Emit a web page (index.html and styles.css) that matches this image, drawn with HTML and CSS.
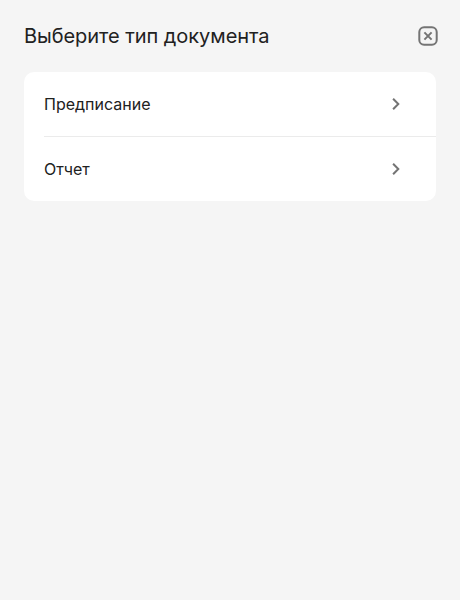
FILE: index.html
```html
<!DOCTYPE html>
<html lang="ru">
<head>
<meta charset="utf-8">
<title>Выберите тип документа</title>
<link rel="stylesheet" href="styles.css">
</head>
<body>
<header class="header">
  <h1 class="title">Выберите тип документа</h1>
  <button class="close" aria-label="Закрыть">
    <svg width="20" height="20" viewBox="0 0 20 20" fill="none" stroke="#747474" stroke-width="2"><rect x="1.3" y="1.3" width="17.4" height="17.4" rx="4.8"/><path d="M6.4 6.4l7.2 7.2m0-7.2l-7.2 7.2"/></svg>
  </button>
</header>
<main class="list">
  <a class="row"><span>Предписание</span><svg class="chevron" width="8" height="12" viewBox="0 0 8 12" fill="none" stroke="#747474" stroke-width="2"><path d="M1.1 .8l5.2 5.2-5.2 5.2"/></svg></a>
  <a class="row"><span>Отчет</span><svg class="chevron" width="8" height="12" viewBox="0 0 8 12" fill="none" stroke="#747474" stroke-width="2"><path d="M1.1 .8l5.2 5.2-5.2 5.2"/></svg></a>
</main>
</body>
</html>
```

FILE: styles.css
```css
* { box-sizing: border-box; }
body { margin: 0; min-height: 600px; background: #f5f5f5; color: #212121; font-family: Inter, "Open Sans", sans-serif; }
.header { height: 72px; padding: 0 22px 0 24px; display: flex; align-items: center; justify-content: space-between; }
.title { margin: 0; font-size: 20px; line-height: 28px; font-weight: 400; letter-spacing: -0.05px; white-space: nowrap; }
.close { width: 20px; height: 20px; padding: 0; border: 0; background: none; }
.close svg, .chevron { display: block; }
.list { margin: 0 24px; padding-left: 20px; background: #fff; border-radius: 10px; }
.row { height: 64px; padding-right: 36px; display: flex; align-items: center; justify-content: space-between; font-size: 16px; line-height: 24px; }
.row + .row { height: 65px; border-top: 1px solid #ebebeb; }
```
